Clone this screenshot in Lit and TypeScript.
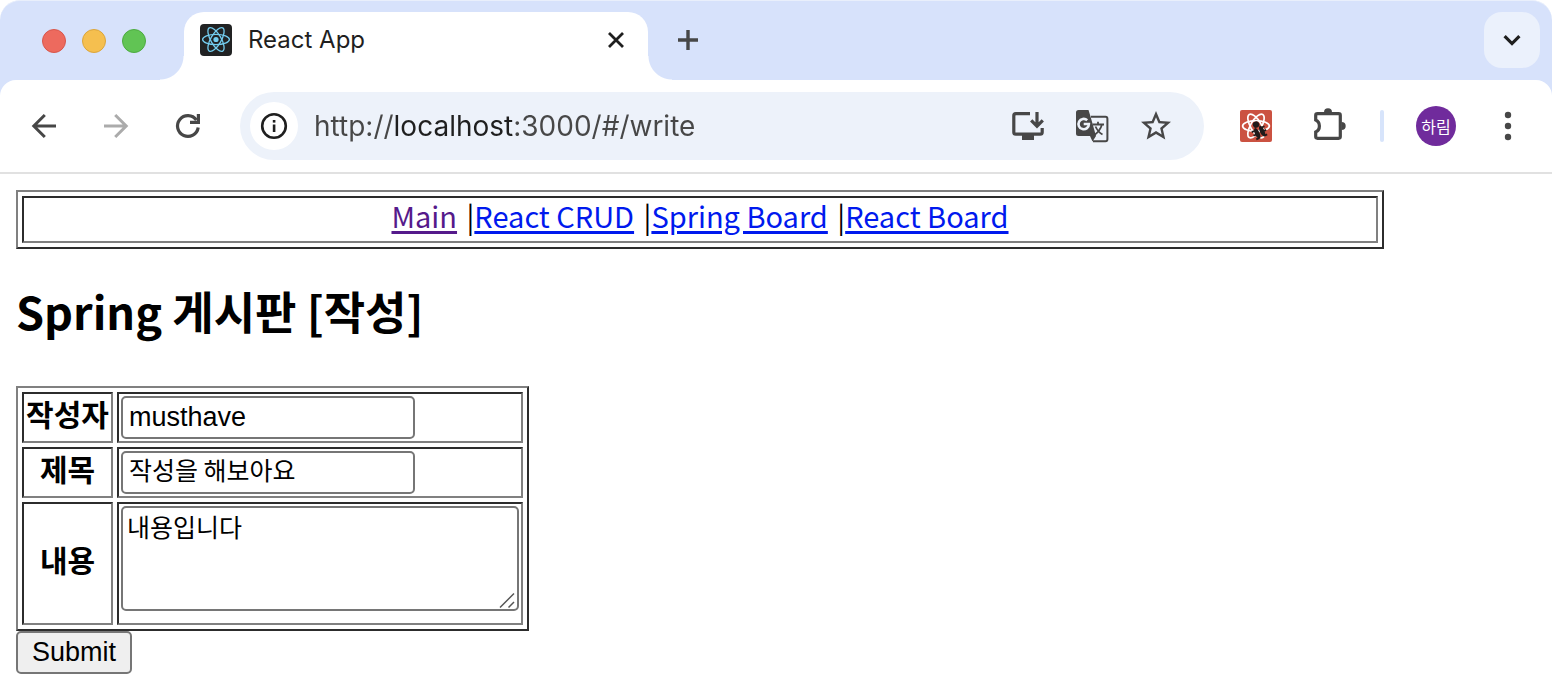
import { LitElement, html, css, svg } from "lit";
import { customElement, property, state } from "lit/decorators.js";

/* ---------- icons ---------- */

const reactMark = html`<svg viewBox="0 0 32 32" width="32" height="32" aria-hidden="true">
  <rect width="32" height="32" rx="4" fill="#212223"></rect>
  <g fill="none" stroke="#74cdef" stroke-width="1.3">
    ${[0, 60, 120].map((a) => svg`<ellipse cx="16" cy="15.5" rx="13.4" ry="5.2" transform="rotate(${a} 16 15.5)"></ellipse>`)}
  </g>
  <circle cx="16" cy="15.5" r="2.6" fill="#74cdef"></circle>
</svg>`;

const closeIcon = html`<svg viewBox="0 0 24 24" width="24" height="24" aria-hidden="true">
  <path d="M5 5L19 19M19 5L5 19" stroke="#1f1f1f" stroke-width="2.8"></path>
</svg>`;

const plusIcon = html`<svg viewBox="0 0 24 24" width="24" height="24" aria-hidden="true">
  <path d="M12 2V22M2 12H22" stroke="#474747" stroke-width="3.4"></path>
</svg>`;

const chevronIcon = html`<svg viewBox="0 0 24 24" width="24" height="24" aria-hidden="true">
  <path d="M4.6 8.2L12 15.6L19.4 8.2" fill="none" stroke="#1f1f1f" stroke-width="3.2"></path>
</svg>`;

const backIcon = html`<svg viewBox="0 0 36 36" width="36" height="36" aria-hidden="true">
  <path d="M30 18H8M18.8 7L7.8 18L18.8 29" fill="none" stroke="#474747" stroke-width="3"></path>
</svg>`;

const forwardIcon = html`<svg viewBox="0 0 36 36" width="36" height="36" aria-hidden="true">
  <path d="M6 18H28M17.2 7L28.2 18L17.2 29" fill="none" stroke="#ababab" stroke-width="3"></path>
</svg>`;

const reloadIcon = html`<svg viewBox="0 0 36 36" width="36" height="36" aria-hidden="true">
  <path d="M28.2 19.5A10.4 10.4 0 1 1 26.4 12" fill="none" stroke="#474747" stroke-width="3.2"></path>
  <path d="M28.4 6V14.4H20" fill="none" stroke="#474747" stroke-width="3.2"></path>
</svg>`;

const infoIcon = html`<svg viewBox="0 0 28 28" width="28" height="28" aria-hidden="true">
  <circle cx="14" cy="14" r="11.8" fill="none" stroke="#1f1f1f" stroke-width="2.6"></circle>
  <rect x="12.8" y="12.5" width="2.6" height="7.5" fill="#1f1f1f"></rect>
  <rect x="12.8" y="8" width="2.6" height="2.6" fill="#1f1f1f"></rect>
</svg>`;

const installIcon = html`<svg viewBox="0 0 36 36" width="36" height="36" aria-hidden="true">
  <path d="M20 5.7H5.8Q3.8 5.7 3.8 7.7V24.2Q3.8 26.2 5.8 26.2H30.2Q32.2 26.2 32.2 24.2V20" fill="none" stroke="#474747" stroke-width="3.2"></path>
  <rect x="12" y="27" width="12" height="5" fill="#474747"></rect>
  <path d="M27 4V18M21.2 12.4L27 18.2L32.8 12.4" fill="none" stroke="#474747" stroke-width="3.2"></path>
</svg>`;

const translateIcon = html`<svg viewBox="0 0 36 36" width="36" height="36" aria-hidden="true">
  <path d="M17 8.8H31.5Q33.4 8.8 33.4 10.7V31.3Q33.4 33.2 31.5 33.2H19" fill="none" stroke="#474747" stroke-width="2"></path>
  <path d="M4.5 2H14.5L16.5 8.5L22 28L18.5 33.5L16 28H4.5Q2 28 2 25.5V4.5Q2 2 4.5 2Z" fill="#474747"></path>
  <path d="M13.2 12.2A5.2 5.2 0 1 0 14.9 16H9.7" fill="none" stroke="#edf2fa" stroke-width="2.6"></path>
  <path d="M18.5 16.5H30M24 13.8V16.5M28 16.5Q26 23 20.5 27M21.5 18.5Q24 24 28.5 26.5" fill="none" stroke="#474747" stroke-width="1.8"></path>
</svg>`;

const starIcon = html`<svg viewBox="0 0 24 24" width="36" height="36" aria-hidden="true">
  <path fill="#474747" d="M22 9.24l-7.19-.62L12 2 9.19 8.63 2 9.24l5.46 4.73L5.82 21 12 17.27 18.18 21l-1.63-7.03L22 9.24zM12 15.4l-3.76 2.27 1-4.28-3.32-2.88 4.38-.38L12 6.1l1.71 4.04 4.38.38-3.32 2.88 1 4.28L12 15.4z"></path>
</svg>`;

const debugIcon = html`<svg viewBox="0 0 32 32" width="32" height="32" aria-hidden="true">
  <rect width="32" height="32" rx="2" fill="#cb5241"></rect>
  <g fill="none" stroke="#fff" stroke-width="1.7">
    ${[0, 60, 120].map((a) => svg`<ellipse cx="16" cy="16" rx="13.4" ry="5.4" transform="rotate(${a} 16 16)"></ellipse>`)}
  </g>
  <g transform="rotate(-25 19 21)">
    <circle cx="19" cy="14" r="3.2" fill="#201a1a"></circle>
    <ellipse cx="16.4" cy="22.5" rx="2.3" ry="5.8" fill="#201a1a"></ellipse>
    <ellipse cx="21.8" cy="22.5" rx="2.3" ry="5.8" fill="#201a1a"></ellipse>
    <path d="M12 19H16M12 23H16M13 27.5H16M22 19H26M22 23H26M22 27.5H25" stroke="#201a1a" stroke-width="1.8"></path>
  </g>
</svg>`;

const puzzleIcon = html`<svg viewBox="0 0 36 36" width="36" height="36" aria-hidden="true">
  <path d="M5.5 5.7H26.6Q28.3 5.7 28.3 7.4V28.6Q28.3 30.3 26.6 30.3H5.5Q3.7 30.3 3.7 28.6V24Q7.4 22.4 7.4 18T3.7 12V7.4Q3.7 5.7 5.5 5.7Z" fill="none" stroke="#474747" stroke-width="3.2"></path>
  <path d="M12 4.5A4 4.2 0 0 1 20 4.5ZM29.5 14A4.2 4 0 0 1 29.5 22Z" fill="#474747"></path>
</svg>`;

const dotsIcon = html`<svg viewBox="0 0 36 36" width="36" height="36" aria-hidden="true">
  <g fill="#474747"><circle cx="18" cy="7" r="3.2"></circle><circle cx="18" cy="18" r="3.2"></circle><circle cx="18" cy="29" r="3.2"></circle></g>
</svg>`;

const reset = css`
  :host { display: block; box-sizing: border-box; }
  *, *::before, *::after { box-sizing: border-box; }
  svg { display: block; flex: none; }
  .icon-btn {
    display: grid; place-items: center; flex: none;
    margin: 0; padding: 0; border: 0; background: none; cursor: pointer;
  }
`;

/* ---------- tab strip ---------- */

@customElement("tab-strip")
class TabStrip extends LitElement {
  @property() title = "";

  static styles = [reset, css`
    .strip {
      display: flex; align-items: flex-start; height: 80px;
      background: #d7e2fb; border-top: 1px solid #e9effb;
      border-radius: 20px 20px 0 0;
      font-family: Inter, "Noto Sans CJK KR", sans-serif;
    }
    .lights { display: flex; gap: 16px; padding: 28px 38px 0 42px; }
    .light { width: 24px; height: 24px; border-radius: 50%; border: 1px solid; }
    .red { background: #ed6a5e; border-color: #d8564b; }
    .amber { background: #f5bf4f; border-color: #dba53b; }
    .green { background: #61c454; border-color: #4dab40; }
    .tab {
      position: relative; display: flex; align-items: center; gap: 16px;
      width: 464px; height: 68px; margin-top: 11px; padding: 0 20px 12px 16px;
      background: #fff; border-radius: 20px 20px 0 0;
    }
    .tab::before, .tab::after {
      content: ""; position: absolute; bottom: 0; width: 24px; height: 24px;
    }
    .tab::before { right: 100%; background: radial-gradient(circle at 0 0, transparent 23px, #fff 24px); }
    .tab::after { left: 100%; background: radial-gradient(circle at 100% 0, transparent 23px, #fff 24px); }
    .name { flex: 1; font-size: 24px; line-height: 32px; color: #1f1f1f; }
    .close { width: 24px; height: 24px; }
    .add { width: 40px; height: 40px; margin: 19px 0 0 20px; }
    .search {
      width: 56px; height: 56px; margin: 11px 12px 0 auto;
      border-radius: 18px; background: #ebf1fc;
    }
  `];

  render() {
    return html`<div class="strip">
      <div class="lights">
        <span class="light red"></span><span class="light amber"></span><span class="light green"></span>
      </div>
      <div class="tab">
        ${reactMark}
        <span class="name">${this.title}</span>
        <button class="icon-btn close" aria-label="Close tab">${closeIcon}</button>
      </div>
      <button class="icon-btn add" aria-label="New tab">${plusIcon}</button>
      <button class="icon-btn search" aria-label="Search tabs">${chevronIcon}</button>
    </div>`;
  }
}

/* ---------- toolbar ---------- */

@customElement("tool-bar")
class ToolBar extends LitElement {
  @property() url = "";
  @property() profile = "";

  static styles = [reset, css`
    :host { background: #d7e2fb; }
    .bar {
      display: flex; align-items: center; padding: 12px 24px 12px 20px;
      background: #fff; border-bottom: 2px solid #e1e1e1; border-radius: 16px 16px 0 0;
      font-family: Inter, "Noto Sans CJK KR", sans-serif;
    }
    .group { display: flex; gap: 24px; }
    .nav-btn { width: 48px; height: 48px; }
    .omnibox {
      flex: 1; min-width: 0; display: flex; align-items: center; height: 68px;
      margin: 0 36px 0 28px; padding: 0 30px 0 10px;
      border-radius: 34px; background: #edf2fa;
    }
    .info { width: 48px; height: 48px; border-radius: 50%; background: #fff; }
    .address {
      flex: 1; min-width: 0; margin: 0 16px; padding: 0; border: 0; outline: 0;
      font: 28px/40px Inter, sans-serif; height: 40px;
      color: #474747; -webkit-text-fill-color: transparent; caret-color: #1f1f1f;
      background: linear-gradient(to right, #474747 79px, #1f1f1f 79px 200px, #474747 200px);
      -webkit-background-clip: text; background-clip: text;
    }
    .actions { display: flex; gap: 28px; }
    .tools { display: flex; align-items: center; gap: 32px; }
    .debug { width: 32px; height: 32px; margin-right: 8px; }
    .rule { width: 4px; height: 32px; border-radius: 2px; background: #d7e4fb; }
    .avatar {
      width: 40px; height: 40px; border-radius: 50%; background: #702b9c; color: #fff;
      font: 16px/24px "Noto Sans CJK KR", sans-serif;
    }
    .menu { width: 40px; height: 40px; }
  `];

  render() {
    return html`<div class="bar">
      <div class="group">
        <button class="icon-btn nav-btn" aria-label="Back">${backIcon}</button>
        <button class="icon-btn nav-btn" aria-label="Forward">${forwardIcon}</button>
        <button class="icon-btn nav-btn" aria-label="Reload">${reloadIcon}</button>
      </div>
      <div class="omnibox">
        <button class="icon-btn info" aria-label="Site information">${infoIcon}</button>
        <input class="address" type="text" aria-label="Address" spellcheck="false" .value=${this.url} />
        <div class="actions">
          <button class="icon-btn" aria-label="Install app">${installIcon}</button>
          <button class="icon-btn" aria-label="Translate">${translateIcon}</button>
          <button class="icon-btn" aria-label="Bookmark">${starIcon}</button>
        </div>
      </div>
      <div class="tools">
        <button class="icon-btn debug" aria-label="React Developer Tools">${debugIcon}</button>
        <button class="icon-btn" aria-label="Extensions">${puzzleIcon}</button>
        <span class="rule"></span>
        <button class="icon-btn avatar">${this.profile}</button>
        <button class="icon-btn menu" aria-label="Menu">${dotsIcon}</button>
      </div>
    </div>`;
  }
}

/* ---------- page navigation ---------- */

const links = [
  { label: "Main", href: "#/", visited: true },
  { label: "React CRUD", href: "#/crud" },
  { label: "Spring Board", href: "#/list" },
  { label: "React Board", href: "#/board" },
];

@customElement("site-nav")
class SiteNav extends LitElement {
  static styles = [reset, css`
    .outer {
      width: 90%; padding: 4px; border: 2px solid;
      border-color: #808080 #2c2c2c #2c2c2c #808080;
    }
    .inner {
      padding: 0 2px 9px; border: 2px solid; text-align: center;
      border-color: #2c2c2c #808080 #808080 #2c2c2c;
      font-size: 29px; line-height: 34px;
    }
    a { color: #0019ee; text-decoration-thickness: 3px; text-underline-offset: 3px; }
    a.visited { color: #551a8b; }
    .sep { padding-left: 3px; }
  `];

  render() {
    return html`<nav class="outer"><div class="inner">${links.map(
      (l, i) => html`${i ? html`<span class="sep"> |</span>` : ""}<a class=${l.visited ? "visited" : ""} href=${l.href}>${l.label}</a>`
    )}</div></nav>`;
  }
}

/* ---------- write form ---------- */

@customElement("write-form")
class WriteForm extends LitElement {
  @state() writer = "musthave";
  @state() subject = "작성을 해보아요";
  @state() contents = "내용입니다";

  static styles = [reset, css`
    form { margin: 0; }
    table {
      border-collapse: separate; border-spacing: 4px; border: 2px solid;
      border-color: #808080 #2c2c2c #2c2c2c #808080;
    }
    th, td {
      padding: 2px; border: 2px solid;
      border-color: #2c2c2c #808080 #808080 #2c2c2c;
    }
    th { min-width: 91px; padding: 0 2px 10px; font-size: 30px; line-height: 36px; font-weight: 700; }
    label { display: block; }
    .field, .area {
      display: block; margin: 0; border: 2px solid #767676; border-radius: 5px;
      background: #fff; color: #000; outline: 0;
    }
    .field { width: 294px; height: 43px; padding: 0 6px; }
    .latin { font: 27px/36px "Liberation Sans", sans-serif; }
    .korean { font: 25px/36px "Noto Sans CJK KR", sans-serif; }
    .field.korean { padding-bottom: 7px; line-height: 32px; }
    .box { position: relative; margin-bottom: 10px; }
    .area { width: 398px; height: 105px; padding: 0 4px; resize: none; }
    .grip { position: absolute; right: 2px; bottom: 1px; pointer-events: none; }
    .submit {
      display: block; margin: 0; padding: 0 14px 2px; height: 43px;
      border: 2px solid #767676; border-radius: 5px; background: #efefef; color: #000;
      font: 27px/36px "Liberation Sans", sans-serif;
    }
  `];

  render() {
    return html`<form @submit=${(e: Event) => e.preventDefault()}>
      <table>
        <tr>
          <th scope="row"><label for="writer">작성자</label></th>
          <td><input id="writer" class="field latin" type="text" .value=${this.writer} /></td>
        </tr>
        <tr>
          <th scope="row"><label for="subject">제목</label></th>
          <td><input id="subject" class="field korean" type="text" .value=${this.subject} /></td>
        </tr>
        <tr>
          <th scope="row"><label for="contents">내용</label></th>
          <td>
            <div class="box">
              <textarea id="contents" class="area korean" .value=${this.contents}></textarea>
              <svg class="grip" viewBox="0 0 18 18" width="18" height="18" aria-hidden="true">
                <path d="M1 15.500L15 1.500M9.500 15.500L15 10" stroke="#555" stroke-width="1.500"></path>
              </svg>
            </div>
          </td>
        </tr>
      </table>
      <button class="submit" type="submit">Submit</button>
    </form>`;
  }
}

/* ---------- window ---------- */

@customElement("app-root")
class AppRoot extends LitElement {
  static styles = [reset, css`
    :host { min-height: 100vh; background: #fff; }
    .page {
      padding: 16px 16px 10px; color: #000;
      font-family: "Noto Sans CJK KR", sans-serif;
    }
    h2 { margin: 32px 0 45px; font-size: 45px; line-height: 60px; font-weight: 700; }
  `];

  render() {
    return html`
      <tab-strip title="React App"></tab-strip>
      <tool-bar url="http://localhost:3000/#/write" profile="하림"></tool-bar>
      <main class="page">
        <site-nav></site-nav>
        <h2>Spring 게시판 [작성]</h2>
        <write-form></write-form>
      </main>
    `;
  }
}
